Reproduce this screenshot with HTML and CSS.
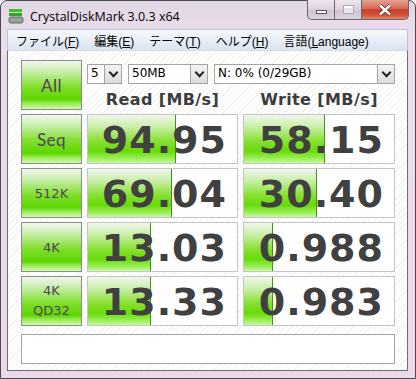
FILE: index.html
```
<!DOCTYPE html>
<html lang="ja">

<head>
    <meta charset="UTF-8">
    <title>CrystalDiskMark 3.0.3 x64</title>
    <link rel="stylesheet" href="styles.css">
</head>

<body>
    <div class="window">
        <div class="titlebar">
            <svg class="app-icon" width="16" height="16" viewBox="0 0 16 16">
                <rect x="1" y="1" width="13" height="3" fill="#3cc030" />
                <rect x="1" y="5" width="13" height="3" fill="#2ea828" />
                <rect x="1" y="9" width="14" height="6" rx="2" fill="#9aa0a0" stroke="#5c6464" />
                <rect x="11" y="11" width="2" height="2" fill="#40e040" />
            </svg>
            <span class="title">CrystalDiskMark 3.0.3 x64</span>
            <div class="caption">
                <span class="cap-btn cap-min"><i></i></span>
                <span class="cap-btn cap-max"><i></i></span>
                <span class="cap-btn cap-close">
                    <svg width="16" height="12" viewBox="0 0 16 12">
                        <path d="M3 1.5 L13 10.5 M13 1.5 L3 10.5" stroke="#5a2a22" stroke-width="4" />
                        <path d="M3 1.5 L13 10.5 M13 1.5 L3 10.5" stroke="#fff" stroke-width="2.4" />
                    </svg>
                </span>
            </div>
        </div>

        <ul class="menubar">
            <li>ファイル(<u>F</u>)</li>
            <li>編集(<u>E</u>)</li>
            <li>テーマ(<u>T</u>)</li>
            <li>ヘルプ(<u>H</u>)</li>
            <li>言語(<u>L</u>anguage)</li>
        </ul>

        <div class="client">
            <div class="grid">
                <div class="btn btn-comic">All</div>
                <div class="head">
                    <div class="selects">
                        <div class="select sel-count"><span>5</span><b></b></div>
                        <div class="select sel-size"><span>50MB</span><b></b></div>
                        <div class="select sel-drive"><span>N: 0% (0/29GB)</span><b></b></div>
                    </div>
                    <div class="labels">
                        <div>Read [MB/s]</div>
                        <div>Write [MB/s]</div>
                    </div>
                </div>

                <div class="btn btn-comic">Seq</div>
                <div class="val"><i class="fill" style="width: 88px"></i><span>94.95</span></div>
                <div class="val"><i class="fill" style="width: 81px"></i><span>58.15</span></div>

                <div class="btn">512K</div>
                <div class="val"><i class="fill" style="width: 84px"></i><span>69.04</span></div>
                <div class="val"><i class="fill" style="width: 73px"></i><span>30.40</span></div>

                <div class="btn">4K</div>
                <div class="val"><i class="fill" style="width: 63px"></i><span>13.03</span></div>
                <div class="val"><i class="fill" style="width: 29px"></i><span>0.988</span></div>

                <div class="btn btn-two">4K<br>QD32</div>
                <div class="val"><i class="fill" style="width: 63px"></i><span>13.33</span></div>
                <div class="val"><i class="fill" style="width: 29px"></i><span>0.983</span></div>
            </div>
            <div class="status"></div>
        </div>
    </div>
</body>

</html>
```

FILE: styles.css
```
* {
    margin: 0;
    padding: 0;
    box-sizing: border-box;
}

body {
    width: 416px;
    height: 379px;
    overflow: hidden;
    background: #fff;
    font-family: "Liberation Sans", "Noto Sans CJK JP", sans-serif;
}

.window {
    width: 416px;
    height: 379px;
    border: 1px solid #4a4a4e;
    border-radius: 7px 7px 0 0;
    background: linear-gradient(#e2d8e6, #ecdcec 40px, #ecd8ea);
    display: flex;
    flex-direction: column;
    padding: 0 7px 7px 6px;
}

/* title bar */
.titlebar {
    height: 28px;
    display: flex;
    align-items: center;
    position: relative;
}

.app-icon {
    margin: 2px 6px 0 1px;
}

.title {
    font-family: "Open Sans", sans-serif;
    font-size: 12.5px;
    color: #000;
    margin-top: 2px;
}

.caption {
    position: absolute;
    top: -1px;
    right: -1px;
    display: flex;
}

.cap-btn {
    height: 20px;
    border: 1px solid #6c6470;
    border-top: none;
    display: flex;
    align-items: center;
    justify-content: center;
}

.cap-min,
.cap-max {
    width: 27px;
    background: linear-gradient(#efe6ef, #dcd0dc 50%, #cfc3d0 51%, #dcd2de);
    border-right: none;
}

.cap-min {
    border-radius: 0 0 0 5px;
}

.cap-min i {
    width: 11px;
    height: 4px;
    margin-top: 5px;
    background: #fff;
    border: 1px solid #55505a;
}

.cap-max i {
    width: 11px;
    height: 9px;
    border: 1px solid #b0a8b4;
    background: #ebe4ec;
    box-shadow: inset 0 2px 0 #fff;
}

.cap-close {
    width: 48px;
    border-radius: 0 0 5px 0;
    background: linear-gradient(#e6a090, #d66a58 45%, #c63c28 52%, #d4543c 80%, #e08870);
}

/* menu */
.menubar {
    list-style: none;
    height: 21px;
    display: flex;
    align-items: center;
    gap: 13px;
    padding-left: 7px;
    border: 1px solid #b8c4d8;
    border-bottom: none;
    background: linear-gradient(#f6f8fc, #e6ecf6 60%, #dbe3f1);
    font-size: 12px;
    color: #000;
}

.menubar li {
    padding: 0 1px;
}

/* client area */
.client {
    flex: 1;
    border: 1px solid #6f6f6f;
    border-top-color: #d8dde6;
    background: repeating-linear-gradient(135deg, #fff 0 3px, #f1f1f1 3px 4px);
    padding: 9px 12px 0 13px;
}

.grid {
    display: grid;
    grid-template-columns: 61px 151px 152px;
    grid-auto-rows: 50px;
    column-gap: 5px;
    row-gap: 4px;
}

.btn {
    border: 1px solid #8a8e88;
    background: linear-gradient(#f4f6f2, #c8eeaa 22%, #7ede28 55%, #5cd600 80%, #96ea50 88%, #d4f8b0);
    display: flex;
    align-items: center;
    justify-content: center;
    text-align: center;
    font-family: "DejaVu Sans", sans-serif;
    font-size: 13px;
    color: #4e4658;
}

.btn-comic {
    font-family: "Lato", sans-serif;
    font-size: 17px;
    letter-spacing: 0.5px;
}

.btn-two {
    line-height: 20px;
}

.head {
    grid-column: 2 / 4;
    display: flex;
    flex-direction: column;
}

.selects {
    display: flex;
    margin-top: 4px;
    height: 20px;
}

.select {
    display: flex;
    border: 1px solid #a4a4a4;
    background: #fff;
    font-family: "DejaVu Sans", sans-serif;
    font-size: 12px;
    color: #000;
    margin-right: 6px;
}

.select span {
    flex: 1;
    padding: 1px 0 0 3px;
    white-space: nowrap;
    overflow: hidden;
}

.select b {
    width: 17px;
    border-left: 1px solid #a4a4a4;
    background: linear-gradient(#f4f4f4, #dcdcdc);
    position: relative;
}

.select b::after {
    content: "";
    position: absolute;
    left: 5px;
    top: 4px;
    width: 5px;
    height: 5px;
    border-right: 2px solid #222;
    border-bottom: 2px solid #222;
    transform: rotate(45deg);
}

.sel-count {
    width: 35px;
}

.sel-size {
    width: 80px;
    margin-right: 6px;
}

.sel-drive {
    width: 181px;
    margin-right: 0;
}

.labels {
    display: grid;
    grid-template-columns: 151px 152px;
    column-gap: 5px;
    margin-top: 6px;
    font-family: "DejaVu Sans", sans-serif;
    font-weight: bold;
    font-size: 16px;
    letter-spacing: 0.4px;
    color: #3c3c3c;
    text-align: center;
}

.val {
    position: relative;
    border: 1px solid #c4c4c4;
    background: #fff;
    display: flex;
    align-items: center;
    justify-content: flex-end;
    padding-right: 10px;
    font-family: "DejaVu Sans", sans-serif;
    font-weight: bold;
    font-size: 38px;
    color: #404040;
}

.val span {
    position: relative;
    margin-top: 1px;
    letter-spacing: 1px;
}

.fill {
    position: absolute;
    left: 0;
    top: 0;
    bottom: 0;
    border-right: 1px solid #3c9418;
    background: linear-gradient(#f2f6ee, #c8eea6 25%, #86e030 55%, #68da08 75%, #90ec48 88%, #c8f8a0);
}

.status {
    margin-top: 8px;
    height: 30px;
    border: 1px solid #a4a4a4;
    background: #fff;
}
```
